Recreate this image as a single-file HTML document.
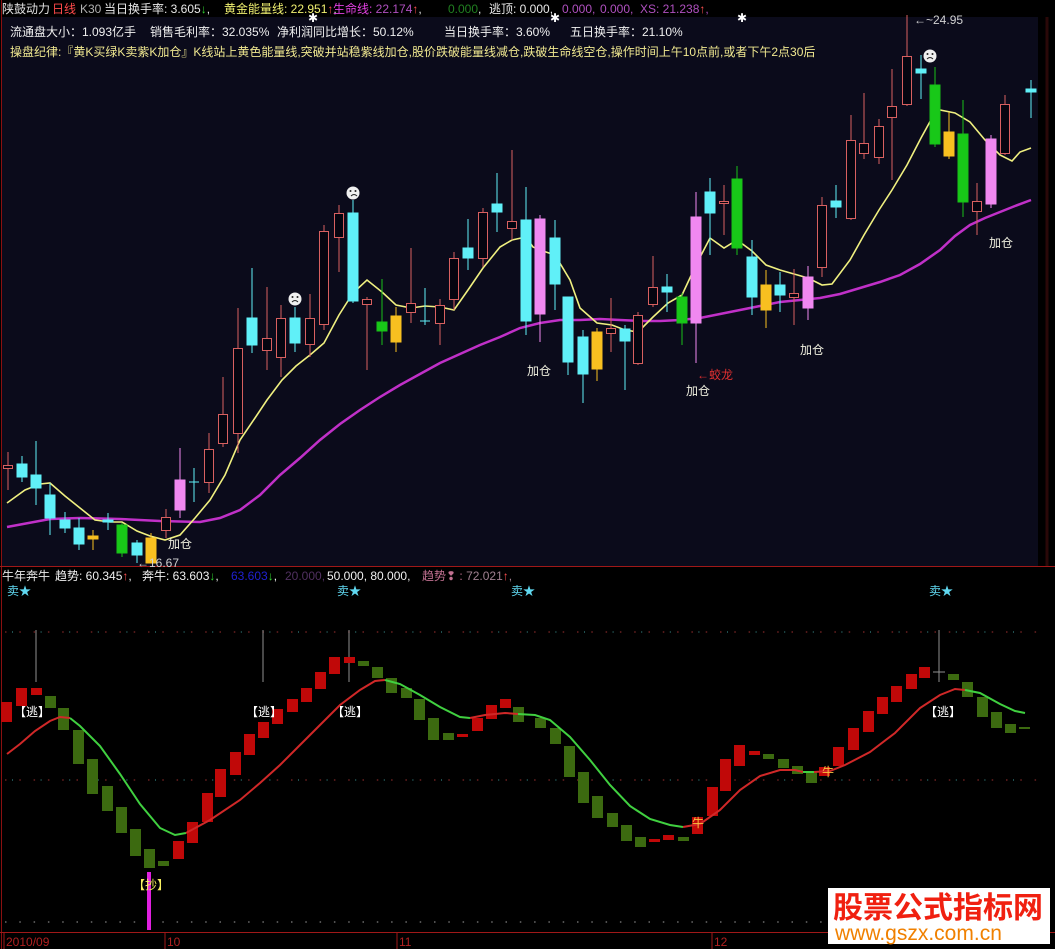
<!DOCTYPE html>
<html><head><meta charset="utf-8"><style>
html,body{margin:0;padding:0;background:#000;}
svg{display:block}
text{font-family:"Liberation Sans","Noto Sans CJK SC",sans-serif;font-size:12px}
</style></head><body>
<svg width="1055" height="949" viewBox="0 0 1055 949" xmlns="http://www.w3.org/2000/svg">
<rect x="0" y="0" width="1055" height="949" fill="#000"/>
<rect x="2" y="17" width="1036" height="549" fill="#0b0b1b"/>
<line x1="1.5" y1="0" x2="1.5" y2="949" stroke="#8a1010"/>
<line x1="1047" y1="17" x2="1047" y2="566" stroke="#2a0808" stroke-width="3"/>
<line x1="0" y1="566.5" x2="1055" y2="566.5" stroke="#a01818"/>
<line x1="0" y1="932.5" x2="1055" y2="932.5" stroke="#a01818"/>

<!-- header row 1 -->
<text x="2" y="13" fill="#e0e0e0">陕鼓动力</text>
<text x="52" y="13" fill="#ff4a4a">日线</text>
<text x="80" y="13" fill="#b0b0b0">K30</text>
<text x="104" y="13" fill="#e8e8e8">当日换手率: 3.605<tspan fill="#30d030">↓</tspan>,</text>
<text x="224" y="13" fill="#f0f070">黄金能量线: 22.951<tspan fill="#ff5050">↑</tspan><tspan fill="#e8e8e8">,</tspan></text>
<text x="333" y="13" fill="#e040e0">生命线: <tspan fill="#b050c0">22.174</tspan><tspan fill="#ff5050">↑</tspan><tspan fill="#e8e8e8">,</tspan></text>
<text x="448" y="13" fill="#208020">0.000<tspan fill="#e8e8e8">,</tspan></text>
<text x="489" y="13" fill="#e8e8e8">逃顶: 0.000,</text>
<text x="562" y="13" fill="#b050c0">0.000,</text>
<text x="600" y="13" fill="#b050c0">0.000,</text>
<text x="640" y="13" fill="#b050c0">XS: 21.238<tspan fill="#ff5050">↑</tspan>,</text>
<text x="308" y="22" fill="#fff" font-size="13">✱</text>
<text x="550" y="22" fill="#fff" font-size="13">✱</text>
<text x="737" y="22" fill="#fff" font-size="13">✱</text>
<!-- header row 2 -->
<text y="36" fill="#f0f0f0" xml:space="preserve"><tspan x="10">流通盘大小：1.093亿手</tspan><tspan x="150">销售毛利率：32.035%</tspan><tspan x="277">净利润同比增长：50.12%</tspan><tspan x="444">当日换手率：3.60%</tspan><tspan x="570">五日换手率：21.10%</tspan></text>
<!-- header row 3 -->
<text x="10" y="56" fill="#f0e890">操盘纪律:『黄K买绿K卖紫K加仓』K线站上黄色能量线,突破并站稳紫线加仓,股价跌破能量线减仓,跌破生命线空仓,操作时间上午10点前,或者下午2点30后</text>

<!-- upper lines -->
<polyline fill="none" stroke="#c030c8" stroke-width="2.5" points="7,527 50,519 80,518 120,519 160,521 200,522 220,518 240,510 260,495 280,475 300,458 320,440 340,424 360,410 380,397 400,385 420,374 440,363 460,354 480,345 500,337 520,328 540,323 560,320 580,320 600,319 620,320 640,321 660,321 680,320 700,318 720,314 740,310 760,306 780,302 800,300 820,298 840,294 860,288 880,282 900,275 920,264 940,250 955,236 970,225 985,218 1000,212 1015,206 1031,200"/>
<polyline fill="none" stroke="#f0f080" stroke-width="1.6" points="7,503 25,490 40,484 50,483 65,496 80,508 95,520 110,522 122,522 137,531 150,536 165,540 180,535 195,518 210,500 225,475 240,440 255,418 267,400 282,380 296,366 310,355 324,343 339,315 353,293 367,280 382,292 396,305 411,308 425,306 440,307 454,310 468,290 483,268 500,247 512,240 526,237 533,247 540,250 555,255 570,280 580,308 597,323 612,325 625,330 638,332 653,317 668,303 682,295 696,265 710,238 724,248 737,240 752,251 766,265 780,270 794,274 808,278 822,285 832,284 850,260 864,235 879,210 892,190 907,165 921,138 932,118 940,110 955,113 970,122 985,140 1000,155 1012,161 1020,152 1031,148"/>

<!-- candles -->
<g stroke-width="1">
<g stroke="#d86060" fill="#050510">
<line x1="8" y1="452" x2="8" y2="490"/><rect x="3.5" y="465.5" width="9" height="3"/>
<line x1="166" y1="509" x2="166" y2="538"/><rect x="161.5" y="517.5" width="9" height="13"/>
<line x1="209" y1="433" x2="209" y2="493"/><rect x="204.5" y="449.5" width="9" height="33"/>
<line x1="223" y1="377" x2="223" y2="447"/><rect x="218.5" y="414.5" width="9" height="29"/>
<line x1="238" y1="308" x2="238" y2="453"/><rect x="233.5" y="348.5" width="9" height="85"/>
<line x1="267" y1="287" x2="267" y2="370"/><rect x="262.5" y="338.5" width="9" height="12"/>
<line x1="281" y1="305" x2="281" y2="377"/><rect x="276.5" y="318.5" width="9" height="39"/>
<line x1="310" y1="294" x2="310" y2="357"/><rect x="305.5" y="318.5" width="9" height="26"/>
<line x1="324" y1="225" x2="324" y2="330"/><rect x="319.5" y="231.5" width="9" height="93"/>
<line x1="339" y1="205" x2="339" y2="272"/><rect x="334.5" y="213.5" width="9" height="24"/>
<line x1="367" y1="297" x2="367" y2="370"/><rect x="362.5" y="299.5" width="9" height="5"/>
<line x1="411" y1="248" x2="411" y2="323"/><rect x="406.5" y="303.5" width="9" height="9"/>
<line x1="440" y1="299" x2="440" y2="345"/><rect x="435.5" y="305.5" width="9" height="18"/>
<line x1="454" y1="252" x2="454" y2="310"/><rect x="449.5" y="258.5" width="9" height="41"/>
<line x1="483" y1="208" x2="483" y2="267"/><rect x="478.5" y="212.5" width="9" height="46"/>
<line x1="512" y1="150" x2="512" y2="240"/><rect x="507.5" y="221.5" width="9" height="7"/>
<line x1="611" y1="298" x2="611" y2="352"/><rect x="606.5" y="328.5" width="9" height="5"/>
<line x1="638" y1="312" x2="638" y2="365"/><rect x="633.5" y="315.5" width="9" height="48"/>
<line x1="653" y1="256" x2="653" y2="307"/><rect x="648.5" y="287.5" width="9" height="17"/>
<line x1="724" y1="185" x2="724" y2="235"/><rect x="719.5" y="201.5" width="9" height="2"/>
<line x1="794" y1="269" x2="794" y2="325"/><rect x="789.5" y="293.5" width="9" height="4"/>
<line x1="822" y1="197" x2="822" y2="277"/><rect x="817.5" y="205.5" width="9" height="62"/>
<line x1="851" y1="115" x2="851" y2="220"/><rect x="846.5" y="140.5" width="9" height="78"/>
<line x1="864" y1="93" x2="864" y2="159"/><rect x="859.5" y="143.5" width="9" height="10"/>
<line x1="879" y1="119" x2="879" y2="164"/><rect x="874.5" y="126.5" width="9" height="31"/>
<line x1="892" y1="69" x2="892" y2="180"/><rect x="887.5" y="106.5" width="9" height="11"/>
<line x1="907" y1="15" x2="907" y2="106"/><rect x="902.5" y="56.5" width="9" height="48"/>
<line x1="977" y1="183" x2="977" y2="235"/><rect x="972.5" y="201.5" width="9" height="10"/>
<line x1="1005" y1="95" x2="1005" y2="155"/><rect x="1000.5" y="104.5" width="9" height="49"/>
</g>
<g stroke="#60f0f8" fill="#60f0f8">
<line x1="22" y1="456" x2="22" y2="482"/><rect x="17" y="464" width="10" height="13"/>
<line x1="36" y1="441" x2="36" y2="505"/><rect x="31" y="475" width="10" height="13"/>
<line x1="50" y1="483" x2="50" y2="535"/><rect x="45" y="495" width="10" height="23"/>
<line x1="65" y1="512" x2="65" y2="533"/><rect x="60" y="520" width="10" height="8"/>
<line x1="79" y1="518" x2="79" y2="550"/><rect x="74" y="528" width="10" height="16"/>
<line x1="108" y1="513" x2="108" y2="530"/><rect x="103" y="520" width="10" height="2"/>
<line x1="137" y1="540" x2="137" y2="563"/><rect x="132" y="543" width="10" height="12"/>
<line x1="194" y1="468" x2="194" y2="502"/><line x1="189" y1="482" x2="199" y2="482"/>
<line x1="252" y1="268" x2="252" y2="353"/><rect x="247" y="318" width="10" height="27"/>
<line x1="295" y1="307" x2="295" y2="352"/><rect x="290" y="318" width="10" height="25"/>
<line x1="353" y1="200" x2="353" y2="303"/><rect x="348" y="213" width="10" height="88"/>
<line x1="425" y1="288" x2="425" y2="325"/><line x1="420" y1="321" x2="430" y2="321"/>
<line x1="468" y1="219" x2="468" y2="270"/><rect x="463" y="248" width="10" height="10"/>
<line x1="497" y1="173" x2="497" y2="232"/><rect x="492" y="204" width="10" height="8"/>
<line x1="526" y1="187" x2="526" y2="335"/><rect x="521" y="220" width="10" height="101"/>
<line x1="555" y1="220" x2="555" y2="310"/><rect x="550" y="238" width="10" height="46"/>
<line x1="568" y1="297" x2="568" y2="375"/><rect x="563" y="297" width="10" height="65"/>
<line x1="583" y1="330" x2="583" y2="403"/><rect x="578" y="337" width="10" height="37"/>
<line x1="625" y1="325" x2="625" y2="390"/><rect x="620" y="329" width="10" height="12"/>
<line x1="667" y1="274" x2="667" y2="312"/><rect x="662" y="287" width="10" height="5"/>
<line x1="710" y1="178" x2="710" y2="255"/><rect x="705" y="192" width="10" height="21"/>
<line x1="752" y1="240" x2="752" y2="315"/><rect x="747" y="257" width="10" height="40"/>
<line x1="780" y1="272" x2="780" y2="312"/><rect x="775" y="285" width="10" height="10"/>
<line x1="836" y1="185" x2="836" y2="218"/><rect x="831" y="201" width="10" height="6"/>
<line x1="921" y1="55" x2="921" y2="99"/><rect x="916" y="69" width="10" height="4"/>
<line x1="1031" y1="80" x2="1031" y2="118"/><rect x="1026" y="89" width="10" height="3"/>
</g>
<g stroke="#f088f0" fill="#f088f0">
<line x1="180" y1="448" x2="180" y2="518"/><rect x="175" y="480" width="10" height="30"/>
<line x1="540" y1="215" x2="540" y2="342"/><rect x="535" y="219" width="10" height="95"/>
<line x1="696" y1="192" x2="696" y2="363"/><rect x="691" y="217" width="10" height="106"/>
<line x1="808" y1="266" x2="808" y2="320"/><rect x="803" y="277" width="10" height="31"/>
<line x1="991" y1="135" x2="991" y2="208"/><rect x="986" y="139" width="10" height="65"/>
</g>
<g stroke="#18c018" fill="#18c818">
<line x1="122" y1="523" x2="122" y2="557"/><rect x="117" y="525" width="10" height="28"/>
<line x1="382" y1="279" x2="382" y2="345"/><rect x="377" y="322" width="10" height="9"/>
<line x1="682" y1="293" x2="682" y2="345"/><rect x="677" y="297" width="10" height="26"/>
<line x1="737" y1="166" x2="737" y2="255"/><rect x="732" y="179" width="10" height="69"/>
<line x1="935" y1="67" x2="935" y2="147"/><rect x="930" y="85" width="10" height="59"/>
<line x1="963" y1="100" x2="963" y2="217"/><rect x="958" y="134" width="10" height="68"/>
</g>
<g stroke="#f8c020" fill="#f8c020">
<line x1="93" y1="530" x2="93" y2="550"/><rect x="88" y="536" width="10" height="3"/>
<line x1="151" y1="533" x2="151" y2="563"/><rect x="146" y="538" width="10" height="25"/>
<line x1="396" y1="307" x2="396" y2="352"/><rect x="391" y="316" width="10" height="26"/>
<line x1="597" y1="328" x2="597" y2="381"/><rect x="592" y="332" width="10" height="37"/>
<line x1="766" y1="270" x2="766" y2="328"/><rect x="761" y="285" width="10" height="25"/>
<line x1="949" y1="112" x2="949" y2="159"/><rect x="944" y="132" width="10" height="24"/>
</g>
</g>
<!-- smileys -->
<g fill="#f0f0f0" stroke="none">
<circle cx="295" cy="299" r="6.5"/><circle cx="353" cy="193" r="6.5"/><circle cx="930" cy="56" r="6.5"/>
</g>
<g stroke="#222" stroke-width="1" fill="none">
<path d="M292 302 q3 -3 6 0 M351 196 q3 -3 6 0 M927 59 q3 -3 6 0"/>
</g>
<g fill="#222"><circle cx="292.5" cy="297" r="1"/><circle cx="297.5" cy="297" r="1"/><circle cx="350.5" cy="191" r="1"/><circle cx="355.5" cy="191" r="1"/><circle cx="927.5" cy="54" r="1"/><circle cx="932.5" cy="54" r="1"/></g>
<!-- labels upper -->
<g fill="#f0f0e0" font-size="12">
<text x="168" y="548">加仓</text><text x="527" y="375">加仓</text><text x="686" y="395">加仓</text><text x="800" y="354">加仓</text><text x="989" y="247">加仓</text>
</g>
<text x="697" y="379" fill="#e03030" font-size="12">←蛟龙</text>
<text x="137" y="567" fill="#d0d0d0" font-size="11">←16.67</text>
<text x="914" y="24" fill="#d0d0d0" font-size="11">←~24.95</text>

<!-- lower header -->
<text x="2" y="580" fill="#e8e8e8">牛年奔牛</text>
<text x="55" y="580" fill="#f0f0f0">趋势: 60.345<tspan fill="#ff5050">↑</tspan>,</text>
<text x="142" y="580" fill="#f0f0f0">奔牛: 63.603<tspan fill="#30d030">↓</tspan>,</text>
<text x="231" y="580" fill="#2020d0">63.603<tspan fill="#30d030">↓</tspan><tspan fill="#f0f0f0">,</tspan></text>
<text x="285" y="580" fill="#503060">20.000,</text>
<text x="327" y="580" fill="#f0f0f0">50.000, 80.000,</text>
<text x="422" y="580" fill="#c07090">趋势❢ : <tspan fill="#a08090">72.021</tspan><tspan fill="#ff5050">↑</tspan><tspan fill="#a08090">,</tspan></text>
<g fill="#60d8f0" font-size="14"><text x="7" y="595">卖★</text><text x="337" y="595">卖★</text><text x="511" y="595">卖★</text><text x="929" y="595">卖★</text></g>

<!-- dotted grid lines -->
<line x1="5" y1="632" x2="1040" y2="632" stroke="#a03030" stroke-dasharray="1.5 12.8"/>
<line x1="12" y1="632" x2="1040" y2="632" stroke="#40a0a0" stroke-dasharray="1 27.6"/>
<line x1="5" y1="780" x2="1040" y2="780" stroke="#a03030" stroke-dasharray="1.5 12.8"/>
<line x1="12" y1="780" x2="1040" y2="780" stroke="#40a0a0" stroke-dasharray="1 27.6"/>
<line x1="5" y1="922" x2="1040" y2="922" stroke="#a0a0a0" stroke-dasharray="1.5 12.8"/>
<!-- thin wicks -->
<g stroke="#909090"><line x1="36" y1="630" x2="36" y2="682"/><line x1="263" y1="630" x2="263" y2="682"/><line x1="349" y1="630" x2="349" y2="682"/><line x1="939" y1="630" x2="939" y2="682"/><line x1="933" y1="672" x2="945" y2="672"/></g>

<!-- blocks -->
<g fill="#c00808">
<rect x="1" y="702" width="11" height="20"/><rect x="16" y="688" width="11" height="18"/><rect x="31" y="688" width="11" height="7"/>
<rect x="173" y="841" width="11" height="18"/><rect x="187" y="822" width="11" height="21"/><rect x="202" y="793" width="11" height="29"/><rect x="215" y="769" width="11" height="28"/><rect x="230" y="752" width="11" height="23"/><rect x="244" y="734" width="11" height="21"/><rect x="258" y="722" width="11" height="16"/><rect x="272" y="709" width="11" height="15"/><rect x="287" y="699" width="11" height="13"/><rect x="301" y="688" width="11" height="14"/><rect x="315" y="672" width="11" height="17"/><rect x="329" y="657" width="11" height="17"/><rect x="344" y="657" width="11" height="6"/>
<rect x="457" y="734" width="11" height="3"/><rect x="472" y="718" width="11" height="13"/><rect x="486" y="705" width="11" height="14"/><rect x="500" y="699" width="11" height="9"/>
<rect x="649" y="839" width="11" height="3"/><rect x="663" y="835" width="11" height="5"/><rect x="692" y="817" width="11" height="17"/><rect x="707" y="787" width="11" height="29"/><rect x="720" y="759" width="11" height="32"/><rect x="734" y="745" width="11" height="21"/><rect x="749" y="751" width="11" height="4"/>
<rect x="819" y="767" width="11" height="9"/><rect x="833" y="747" width="11" height="19"/><rect x="848" y="728" width="11" height="22"/><rect x="863" y="711" width="11" height="21"/><rect x="877" y="697" width="11" height="17"/><rect x="891" y="686" width="11" height="16"/><rect x="906" y="674" width="11" height="15"/><rect x="919" y="667" width="11" height="11"/>
</g>
<g fill="#3c6a10">
<rect x="45" y="696" width="11" height="12"/><rect x="58" y="708" width="11" height="22"/><rect x="73" y="730" width="11" height="34"/><rect x="87" y="759" width="11" height="35"/><rect x="102" y="786" width="11" height="25"/><rect x="116" y="807" width="11" height="26"/><rect x="130" y="829" width="11" height="27"/><rect x="144" y="849" width="11" height="19"/><rect x="158" y="861" width="11" height="5"/>
<rect x="358" y="661" width="11" height="5"/><rect x="372" y="667" width="11" height="11"/><rect x="386" y="678" width="11" height="15"/><rect x="401" y="688" width="11" height="10"/><rect x="414" y="699" width="11" height="21"/><rect x="428" y="718" width="11" height="22"/><rect x="443" y="733" width="11" height="7"/>
<rect x="513" y="707" width="11" height="15"/><rect x="535" y="718" width="11" height="10"/><rect x="550" y="728" width="11" height="16"/><rect x="564" y="746" width="11" height="31"/><rect x="578" y="772" width="11" height="31"/><rect x="592" y="796" width="11" height="22"/><rect x="607" y="813" width="11" height="14"/><rect x="621" y="825" width="11" height="16"/><rect x="635" y="837" width="11" height="10"/><rect x="678" y="837" width="11" height="4"/>
<rect x="763" y="754" width="11" height="5"/><rect x="778" y="759" width="11" height="9"/><rect x="792" y="766" width="11" height="8"/><rect x="806" y="772" width="11" height="11"/>
<rect x="948" y="674" width="11" height="6"/><rect x="962" y="682" width="11" height="15"/><rect x="977" y="697" width="11" height="20"/><rect x="991" y="712" width="11" height="16"/><rect x="1005" y="724" width="11" height="9"/><rect x="1019" y="727" width="11" height="2"/>
</g>
<!-- curves -->
<g fill="none" stroke-width="2">
<polyline stroke="#d02828" points="7,754 20,744 35,731 50,721 60,717 70,718"/>
<polyline stroke="#40d040" points="70,718 80,726 100,746 120,774 140,804 160,828 175,835 186,833"/>
<polyline stroke="#d02828" points="186,833 210,820 240,800 260,783 280,765 300,745 320,725 340,705 360,690 375,681 385,680"/>
<polyline stroke="#40d040" points="385,680 400,684 420,695 440,707 460,717 470,718"/>
<polyline stroke="#d02828" points="470,718 485,715 505,713 518,714"/>
<polyline stroke="#40d040" points="518,714 535,715 550,720 570,737 590,760 610,785 630,806 650,819 670,825 683,827"/>
<polyline stroke="#d02828" points="683,827 700,824 720,810 740,790 760,776 780,770 795,770 803,772"/>
<polyline stroke="#40d040" points="803,772 814,772"/>
<polyline stroke="#d02828" points="814,772 830,771 845,765 870,752 895,733 920,708 940,695 955,689 965,690"/>
<polyline stroke="#40d040" points="965,690 980,693 1000,704 1015,711 1025,713"/>
</g>
<g fill="#fff" font-size="12"><text x="14" y="716">【逃】</text><text x="246" y="716">【逃】</text><text x="332" y="716">【逃】</text><text x="925" y="716">【逃】</text></g>
<rect x="147" y="872" width="4" height="58" fill="#e020e0"/>
<text x="133" y="889" fill="#f8f060" font-size="12">【抄】</text>
<text x="692" y="827" fill="#f8c040" font-size="12">牛</text>
<text x="822" y="776" fill="#f8c040" font-size="12">牛</text>

<!-- bottom axis -->
<g stroke="#a01818"><line x1="4" y1="933" x2="4" y2="949"/><line x1="165" y1="933" x2="165" y2="949"/><line x1="397" y1="933" x2="397" y2="949"/><line x1="712" y1="933" x2="712" y2="949"/></g>
<g fill="#b02020" font-size="12"><text x="6" y="946">2010/09</text><text x="167" y="946">10</text><text x="399" y="946">11</text><text x="714" y="946">12</text></g>

<!-- watermark -->
<rect x="828" y="888" width="222" height="56" fill="#fff"/>
<text x="833" y="918" fill="#f02010" style="font-family:'Noto Sans CJK SC',sans-serif;font-size:30px;font-weight:bold">股票公式指标网</text>
<text x="835" y="940" fill="#f08000" style="font-family:'Liberation Sans',sans-serif;font-size:21px">www.gszx.com.cn</text>
</svg>
</body></html>
